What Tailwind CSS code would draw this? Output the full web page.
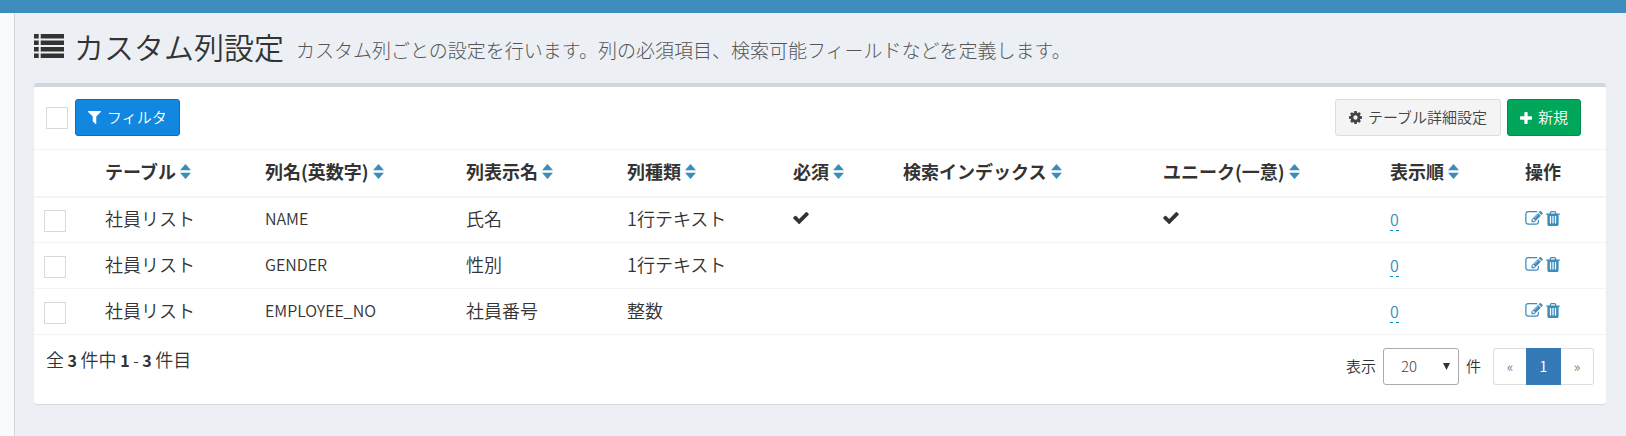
<!DOCTYPE html>
<html lang="ja">
<head>
    <meta charset="UTF-8">
    <meta name="viewport" content="width=device-width, initial-scale=1.0">
    <title>カスタム列設定</title>
    <script src="https://cdn.jsdelivr.net/npm/@tailwindcss/browser@4"></script>
</head>
<body class="bg-[#ecf0f5] min-h-screen flex flex-col font-['Noto_Sans_CJK_JP',sans-serif] text-[#333]">

    <!-- Icon sprite -->
    <svg class="hidden" aria-hidden="true">
        <symbol id="icon-list" viewBox="0 0 30 24">
            <path d="M0 0h4.700v4.500H0zM6.700 0H30v4.500H6.700zM0 6.500h4.700V11H0zM6.700 6.500H30V11H6.700zM0 13h4.700v4.500H0zM6.700 13H30v4.500H6.700zM0 19.500h4.700V24H0zM6.700 19.500H30V24H6.700z"/>
        </symbol>
        <symbol id="icon-filter" viewBox="192 256 1408 1408">
            <path d="M1595 295q17 41-14 70l-493 493v742q0 42-39 59-13 5-25 5-27 0-45-19l-256-256q-19-19-19-45v-486l-493-493q-31-29-14-70 17-39 59-39h1280q42 0 59 39z"/>
        </symbol>
        <symbol id="icon-cog" viewBox="128 128 1536 1536">
            <path d="M1152 896q0-106-75-181t-181-75-181 75-75 181 75 181 181 75 181-75 75-181zm512-109v222q0 12-8 23t-20 13l-185 28q-19 54-39 91 35 50 107 138 10 12 10 25t-9 23q-27 37-99 108t-94 71q-12 0-26-9l-138-108q-44 23-91 38-16 136-29 186-7 28-36 28h-222q-14 0-24.500-8.500t-11.500-21.500l-28-184q-49-16-90-37l-141 107q-10 9-25 9-14 0-25-11-126-114-165-168-7-10-7-23 0-12 8-23 15-21 51-66.500t54-70.500q-27-50-41-99l-183-27q-13-2-21-12.500t-8-23.500v-222q0-12 8-23t19-13l186-28q14-46 39-92-40-57-107-138-10-12-10-24 0-10 9-23 26-36 98.500-107.500t94.500-71.500q13 0 26 10l138 107q44-23 91-38 16-136 29-186 7-28 36-28h222q14 0 24.500 8.500t11.500 21.500l28 184q49 16 90 37l142-107q9-9 24-9 13 0 25 10 129 119 165 170 7 8 7 22 0 12-8 23-15 21-51 66.500t-54 70.500q26 50 41 98l183 28q13 2 21 12.500t8 23.500z"/>
        </symbol>
        <symbol id="icon-plus" viewBox="192 128 1408 1408">
            <path d="M1600 736v192q0 40-28 68t-68 28h-416v416q0 40-28 68t-68 28h-192q-40 0-68-28t-28-68v-416h-416q-40 0-68-28t-28-68v-192q0-40 28-68t68-28h416v-416q0-40 28-68t68-28h192q40 0 68 28t28 68v416h416q40 0 68 28t28 68z"/>
        </symbol>
        <symbol id="icon-sort" viewBox="0 0 11 15">
            <path d="M5.500 0L11 6.200H0zM0 8.800h11L5.500 15z"/>
        </symbol>
        <symbol id="icon-check" viewBox="120 330 1552 1192">
            <path d="M1671 566q0 40-28 68l-724 724-136 136q-28 28-68 28t-68-28l-136-136-362-362q-28-28-28-68t28-68l136-136q28-28 68-28t68 28l294 295 656-657q28-28 68-28t68 28l136 136q28 28 28 68z"/>
        </symbol>
        <symbol id="icon-edit" viewBox="0 128 1792 1536">
            <path d="M888 1184l116-116-152-152-116 116v56h96v96h56zm440-720q-16-16-33 1l-350 350q-17 17-1 33t33-1l350-350q17-17 1-33zm80 594v190q0 119-84.500 203.500t-203.500 84.500h-832q-119 0-203.500-84.500t-84.500-203.500v-832q0-119 84.500-203.500t203.500-84.500h832q63 0 117 25 15 7 18 23 3 17-9 29l-49 49q-14 14-32 8-23-6-45-6h-832q-66 0-113 47t-47 113v832q0 66 47 113t113 47h832q66 0 113-47t47-113v-126q0-13 9-22l64-64q15-15 35-7t20 29zm-96-738l288 288-672 672h-288v-288zm444 132l-92 92-288-288 92-92q28-28 68-28t68 28l152 152q28 28 28 68t-28 68z"/>
        </symbol>
        <symbol id="icon-trash" viewBox="192 128 1408 1536">
            <path d="M704 1376v-704q0-14-9-23t-23-9h-64q-14 0-23 9t-9 23v704q0 14 9 23t23 9h64q14 0 23-9t9-23zm256 0v-704q0-14-9-23t-23-9h-64q-14 0-23 9t-9 23v704q0 14 9 23t23 9h64q14 0 23-9t9-23zm256 0v-704q0-14-9-23t-23-9h-64q-14 0-23 9t-9 23v704q0 14 9 23t23 9h64q14 0 23-9t9-23zm-544-992h448l-48-117q-7-9-17-11h-317q-10 2-17 11zm928 32v64q0 14-9 23t-23 9h-96v948q0 83-47 143.500t-113 60.500h-832q-66 0-113-58.500t-47-141.500v-952h-96q-14 0-23-9t-9-23v-64q0-14 9-23t23-9h309l70-167q15-37 54-63t79-26h320q40 0 79 26t54 63l70 167h309q14 0 23 9t9 23z"/>
        </symbol>
    </svg>

    <!-- Top bar -->
    <header class="bg-[#3c8dbc] h-[13px]"></header>

    <div class="flex flex-1">
        <!-- Sidebar edge -->
        <aside class="w-[15px] bg-[#f9fafc] border-r border-[#d2d6de]"></aside>

        <main class="flex-1 pl-[19px] pr-5">
            <div class="flex items-baseline gap-3 pt-[11px] pb-[15px]">
                <h1 class="flex items-center gap-[10px] text-[30px] leading-[44px] font-[350]">
                    <svg class="w-[30px] h-6 fill-current"><use href="#icon-list"/></svg>
                    カスタム列設定
                </h1>
                <small class="text-[19px] font-light text-[#555]">カスタム列ごとの設定を行います。列の必須項目、検索可能フィールドなどを定義します。</small>
            </div>

            <section class="bg-white border-t-4 border-[#d2d6de] rounded-[3px] shadow-[0_1px_1px_rgba(0,0,0,0.1)]">
                <!-- Toolbar -->
                <div class="flex items-center justify-between pl-3 pr-[25px] pt-3 pb-[13px] text-[15px] font-[350]">
                    <div class="flex items-center gap-[7px]">
                        <input type="checkbox" aria-label="すべて選択" class="appearance-none size-[22px] border border-[#d9d9d9] bg-white">
                        <button type="button" class="flex items-center gap-[6px] h-[37px] px-3 rounded-[3px] border border-[#0d6fb8] bg-[#1187df] text-white">
                            <svg class="size-[13px] fill-current"><use href="#icon-filter"/></svg>
                            フィルタ
                        </button>
                    </div>
                    <div class="flex items-center gap-[6px]">
                        <a href="#" class="flex items-center gap-[6px] h-[37px] px-[13px] rounded-[3px] border border-[#ddd] bg-[#f4f4f4] text-[#444]">
                            <svg class="size-[13px] fill-current"><use href="#icon-cog"/></svg>
                            テーブル詳細設定
                        </a>
                        <a href="#" class="flex items-center gap-[6px] h-[37px] px-3 rounded-[3px] border border-[#008d4c] bg-[#00a65a] text-white">
                            <svg class="size-3 fill-current"><use href="#icon-plus"/></svg>
                            新規
                        </a>
                    </div>
                </div>

                <table class="w-full table-fixed text-left text-[18px]">
                    <colgroup>
                        <col class="w-[63px]">
                        <col class="w-[160px]">
                        <col class="w-[201px]">
                        <col class="w-[161px]">
                        <col class="w-[166px]">
                        <col class="w-[110px]">
                        <col class="w-[260px]">
                        <col class="w-[227px]">
                        <col class="w-[135px]">
                        <col class="w-[89px]">
                    </colgroup>
                    <thead>
                        <tr class="h-[47px] border-t border-b-2 border-t-[#f4f4f4] border-b-[#f4f4f4] whitespace-nowrap">
                            <th></th>
                            <th class="px-2 pb-[3px]">テーブル <a href="#" aria-label="並べ替え" class="inline-block"><svg class="w-[11px] h-[15px] fill-[#3c8dbc]"><use href="#icon-sort"/></svg></a></th>
                            <th class="px-2 pb-[3px]">列名(英数字) <a href="#" aria-label="並べ替え" class="inline-block"><svg class="w-[11px] h-[15px] fill-[#3c8dbc]"><use href="#icon-sort"/></svg></a></th>
                            <th class="px-2 pb-[3px]">列表示名 <a href="#" aria-label="並べ替え" class="inline-block"><svg class="w-[11px] h-[15px] fill-[#3c8dbc]"><use href="#icon-sort"/></svg></a></th>
                            <th class="px-2 pb-[3px]">列種類 <a href="#" aria-label="並べ替え" class="inline-block"><svg class="w-[11px] h-[15px] fill-[#3c8dbc]"><use href="#icon-sort"/></svg></a></th>
                            <th class="px-2 pb-[3px]">必須 <a href="#" aria-label="並べ替え" class="inline-block"><svg class="w-[11px] h-[15px] fill-[#3c8dbc]"><use href="#icon-sort"/></svg></a></th>
                            <th class="px-2 pb-[3px]">検索インデックス <a href="#" aria-label="並べ替え" class="inline-block"><svg class="w-[11px] h-[15px] fill-[#3c8dbc]"><use href="#icon-sort"/></svg></a></th>
                            <th class="px-2 pb-[3px]">ユニーク(一意) <a href="#" aria-label="並べ替え" class="inline-block"><svg class="w-[11px] h-[15px] fill-[#3c8dbc]"><use href="#icon-sort"/></svg></a></th>
                            <th class="px-2 pb-[3px]">表示順 <a href="#" aria-label="並べ替え" class="inline-block"><svg class="w-[11px] h-[15px] fill-[#3c8dbc]"><use href="#icon-sort"/></svg></a></th>
                            <th class="px-2 pb-[3px]">操作</th>
                        </tr>
                    </thead>
                    <tbody class="font-[350]">
                        <tr class="h-[46px] border-b border-[#f4f4f4]">
                            <td class="pl-[10px] pt-[3px]"><input type="checkbox" aria-label="NAME" class="block appearance-none size-[22px] border border-[#d9d9d9] bg-white"></td>
                            <td class="px-2 pb-[3px]">社員リスト</td>
                            <td class="px-2 pb-[3px] text-base">NAME</td>
                            <td class="px-2 pb-[3px]">氏名</td>
                            <td class="px-2 pb-[3px]">1行テキスト</td>
                            <td class="px-2 pb-[3px]"><svg class="w-4 h-3 fill-current"><use href="#icon-check"/></svg></td>
                            <td></td>
                            <td class="px-2 pb-[3px]"><svg class="w-4 h-3 fill-current"><use href="#icon-check"/></svg></td>
                            <td class="px-2 pb-[3px]"><a href="#" class="inline-block text-base leading-[22px] text-[#3c8dbc] border-b border-dashed border-[#0088cc]">0</a></td>
                            <td class="px-2 pb-[3px]">
                                <div class="flex gap-[3px] text-[#3c8dbc]">
                                    <a href="#" aria-label="編集"><svg class="w-[18px] h-[15px] fill-current"><use href="#icon-edit"/></svg></a>
                                    <a href="#" aria-label="削除"><svg class="w-[14px] h-[15px] fill-current"><use href="#icon-trash"/></svg></a>
                                </div>
                            </td>
                        </tr>
                        <tr class="h-[46px] border-b border-[#f4f4f4]">
                            <td class="pl-[10px] pt-[3px]"><input type="checkbox" aria-label="GENDER" class="block appearance-none size-[22px] border border-[#d9d9d9] bg-white"></td>
                            <td class="px-2 pb-[3px]">社員リスト</td>
                            <td class="px-2 pb-[3px] text-base">GENDER</td>
                            <td class="px-2 pb-[3px]">性別</td>
                            <td class="px-2 pb-[3px]">1行テキスト</td>
                            <td></td>
                            <td></td>
                            <td></td>
                            <td class="px-2 pb-[3px]"><a href="#" class="inline-block text-base leading-[22px] text-[#3c8dbc] border-b border-dashed border-[#0088cc]">0</a></td>
                            <td class="px-2 pb-[3px]">
                                <div class="flex gap-[3px] text-[#3c8dbc]">
                                    <a href="#" aria-label="編集"><svg class="w-[18px] h-[15px] fill-current"><use href="#icon-edit"/></svg></a>
                                    <a href="#" aria-label="削除"><svg class="w-[14px] h-[15px] fill-current"><use href="#icon-trash"/></svg></a>
                                </div>
                            </td>
                        </tr>
                        <tr class="h-[46px] border-b border-[#f4f4f4]">
                            <td class="pl-[10px] pt-[3px]"><input type="checkbox" aria-label="EMPLOYEE_NO" class="block appearance-none size-[22px] border border-[#d9d9d9] bg-white"></td>
                            <td class="px-2 pb-[3px]">社員リスト</td>
                            <td class="px-2 pb-[3px] text-base">EMPLOYEE_NO</td>
                            <td class="px-2 pb-[3px]">社員番号</td>
                            <td class="px-2 pb-[3px]">整数</td>
                            <td></td>
                            <td></td>
                            <td></td>
                            <td class="px-2 pb-[3px]"><a href="#" class="inline-block text-base leading-[22px] text-[#3c8dbc] border-b border-dashed border-[#0088cc]">0</a></td>
                            <td class="px-2 pb-[3px]">
                                <div class="flex gap-[3px] text-[#3c8dbc]">
                                    <a href="#" aria-label="編集"><svg class="w-[18px] h-[15px] fill-current"><use href="#icon-edit"/></svg></a>
                                    <a href="#" aria-label="削除"><svg class="w-[14px] h-[15px] fill-current"><use href="#icon-trash"/></svg></a>
                                </div>
                            </td>
                        </tr>
                    </tbody>
                </table>

                <!-- Footer -->
                <div class="flex items-start justify-between px-3 pt-[13px] pb-[19px]">
                    <p class="text-[18px] leading-[22px] font-[350]">全<span class="text-base"> <b class="font-bold">3</b> </span>件中<span class="text-base"> <b class="font-bold">1</b> - <b class="font-bold">3</b> </span>件目</p>
                    <div class="flex items-center text-[15px] font-[350]">
                        <label for="per-page" class="mr-[7px]">表示</label>
                        <div class="relative">
                            <select id="per-page" class="block appearance-none w-[76px] h-[37px] pl-[17px] border border-[#aaa] rounded-[3px] bg-white font-light text-[#444]">
                                <option>10</option>
                                <option selected>20</option>
                                <option>50</option>
                                <option>100</option>
                            </select>
                            <svg class="absolute right-[9px] top-[15px] w-[7px] h-[7px] fill-[#333] pointer-events-none" viewBox="0 0 7 7"><path d="M0 0h7L3.500 7z"/></svg>
                        </div>
                        <span class="ml-[7px] mr-3">件</span>
                        <nav class="flex h-[37px] text-sm leading-[35px] text-center">
                            <span class="w-[33px] border border-r-0 border-[#ddd] rounded-l-[3px] text-[#777]">«</span>
                            <span class="w-[35px] border border-[#337ab7] bg-[#337ab7] font-normal text-white">1</span>
                            <span class="w-[33px] border border-l-0 border-[#ddd] rounded-r-[3px] text-[#777]">»</span>
                        </nav>
                    </div>
                </div>
            </section>
        </main>
    </div>

</body>
</html>
